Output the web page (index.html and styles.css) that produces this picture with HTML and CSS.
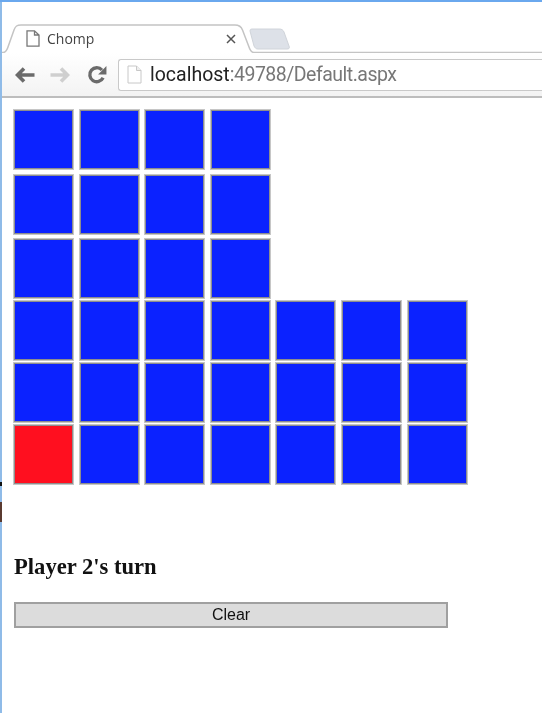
FILE: index.html
```
<!DOCTYPE html>
<html lang="en">
<head>
<meta charset="utf-8">
<title>Chomp</title>
<link rel="stylesheet" href="styles.css">
</head>
<body>
<header class="chrome">
  <div class="tabstrip">
    <svg class="tabshape" width="542" height="31" viewBox="0 0 542 31" aria-hidden="true">
      <path d="M-2 30.500 H1 C4 30.500 5 28 6 25 L12 8 C13.500 4 15 3 19 3 H233 C237 3 239 4 240.500 8 L247 25 C248 28 249 30.500 252 30.500 H545" fill="#fff" stroke="#c4c4c4" stroke-width="1.500"/>
      <path d="M248 9 C248 7 249 7 251 7 H277 C280 7 281 8 282 10 L287 24 C288 26 287 27 285 27 H256 C254 27 253 26 252 24 Z" fill="#dde1e8" stroke="#d0d4da"/>
    </svg>
    <div class="tab">
      <svg class="pageicon" width="14" height="17" viewBox="0 0 14 17" aria-hidden="true"><path d="M1 .8 H8.500 L13 5 V16.200 H1 Z M8.500 .8 V5 H13" fill="#fff" stroke="#777" stroke-width="1.300"/></svg>
      <span class="tabtitle">Chomp</span>
      <svg class="closeicon" width="10" height="10" viewBox="0 0 10 10" aria-hidden="true"><path d="M1 1 L9 9 M9 1 L1 9" stroke="#555" stroke-width="1.500"/></svg>
    </div>
  </div>
  <div class="toolbar">
    <svg class="navicon" width="20" height="16" viewBox="0 0 20 16" aria-hidden="true"><path d="M9 1.500 L2.500 8 L9 14.500 M3 8 H19.500" fill="none" stroke="#6b6b6b" stroke-width="3.600"/></svg>
    <svg class="navicon" width="20" height="16" viewBox="0 0 20 16" aria-hidden="true"><path d="M11 1.500 L17.500 8 L11 14.500 M17 8 H.5" fill="none" stroke="#cfcfcf" stroke-width="3.600"/></svg>
    <svg class="navicon reload" width="20" height="20" viewBox="0 0 18 18" aria-hidden="true"><path d="M14.500 11.500 A6.300 6.300 0 1 1 13.500 4.500" fill="none" stroke="#6b6b6b" stroke-width="3"/><path d="M17.500 1 V8.500 H10 Z" fill="#6b6b6b"/></svg>
    <div class="omnibox">
      <svg class="urlicon" width="15" height="19" viewBox="0 0 15 19" aria-hidden="true"><path d="M1 1 H9.500 L14 5.500 V18 H1 Z" fill="#fff" stroke="#c8c8c8"/><path d="M9.500 1 V5.500 H14" fill="#eee" stroke="#c8c8c8"/></svg>
      <span class="host">localhost</span><span class="path">:49788/Default.aspx</span>
    </div>
  </div>
</header>
<main class="page">
  <div class="row"><button class="cell"></button><button class="cell"></button><button class="cell"></button><button class="cell"></button></div>
  <div class="row row-b"><button class="cell"></button><button class="cell"></button><button class="cell"></button><button class="cell"></button></div>
  <div class="row row-c"><button class="cell"></button><button class="cell"></button><button class="cell"></button><button class="cell"></button></div>
  <div class="row row-d"><button class="cell"></button><button class="cell"></button><button class="cell"></button><button class="cell"></button><button class="cell"></button><button class="cell"></button><button class="cell"></button></div>
  <div class="row row-d"><button class="cell"></button><button class="cell"></button><button class="cell"></button><button class="cell"></button><button class="cell"></button><button class="cell"></button><button class="cell"></button></div>
  <div class="row row-d"><button class="cell poison"></button><button class="cell"></button><button class="cell"></button><button class="cell"></button><button class="cell"></button><button class="cell"></button><button class="cell"></button></div>
  <h3 class="turn">Player 2's turn</h3>
  <button class="clear">Clear</button>
</main>
<span class="edgemark"></span>
</body>
</html>
```
FILE: styles.css
```
html, body {
  margin: 0;
  padding: 0;
  background: #fff;
}
body {
  height: 712px;
  overflow: hidden;
  position: relative;
  border-top: 2px solid #6aa8ee;
  filter: blur(0.3px);
}
.chrome {
  border-left: 2px solid #8fbbe8;
}
.tabstrip {
  position: relative;
  height: 51px;
}
.tabshape {
  position: absolute;
  left: 0;
  top: 20px;
}
.tabshape path {
  stroke-linejoin: round;
}
.tab {
  position: absolute;
  left: 24px;
  top: 27px;
  width: 210px;
  height: 19px;
  display: flex;
  align-items: center;
  font-family: "Open Sans", sans-serif;
  font-size: 14px;
  color: #444;
}
.pageicon {
  margin-right: 7px;
}
.tabtitle {
  flex: 1;
}
.toolbar {
  height: 43px;
  display: flex;
  align-items: center;
  background: linear-gradient(#fff, #f3f3f3);
  border-bottom: 2px solid #bdbdbd;
  padding-left: 13px;
}
.navicon {
  flex: none;
  margin-right: 15px;
}
.reload {
  margin-left: 2px;
  margin-right: 11px;
}
.omnibox {
  flex: 1;
  height: 30px;
  display: flex;
  align-items: center;
  background: #fff;
  border: 1px solid #c9c9c9;
  border-right: 0;
  border-radius: 3px 0 0 3px;
  padding-left: 8px;
  font-family: Roboto, sans-serif;
  font-size: 19.500px;
}
.urlicon {
  margin-right: 8px;
}
.host {
  color: #222;
}
.path {
  color: #777;
  letter-spacing: -0.5px;
}
.page {
  border-left: 2px solid #8fbbe8;
  padding: 11px 0 0 11px;
  height: 604px;
}
.row {
  display: flex;
  gap: 4.600px;
}
.row-b {
  margin-top: 4px;
}
.row-c {
  margin-top: 3px;
}
.row-d {
  margin-top: 1px;
}
.cell {
  flex: none;
  display: block;
  width: 61px;
  height: 61px;
  margin: 0;
  padding: 0;
  background: #0b22ff;
  border: 1px solid #c6c6c6;
  box-shadow: inset 0 0 0 1px #8e8e8e;
}
.poison {
  background: #ff0f1f;
}
.turn {
  margin: 68px 0 0 1px;
  font-family: "Liberation Serif", serif;
  font-size: 22.600px;
  line-height: 28px;
  font-weight: bold;
  color: #111;
}
.clear {
  display: block;
  width: 434px;
  height: 26px;
  margin: 21px 0 0 1px;
  padding: 0;
  background: #dcdcdc;
  border: 2px solid #a0a0a0;
  font-family: "Liberation Sans", sans-serif;
  font-size: 16px;
  color: #111;
}
.edgemark {
  position: absolute;
  left: 0;
  top: 476px;
  width: 2px;
  height: 44px;
  background: linear-gradient(#8fbbe8 0, #8fbbe8 10%, #111 10%, #111 18%, #8fbbe8 18%, #8fbbe8 55%, #5a3a30 55%);
}
```
